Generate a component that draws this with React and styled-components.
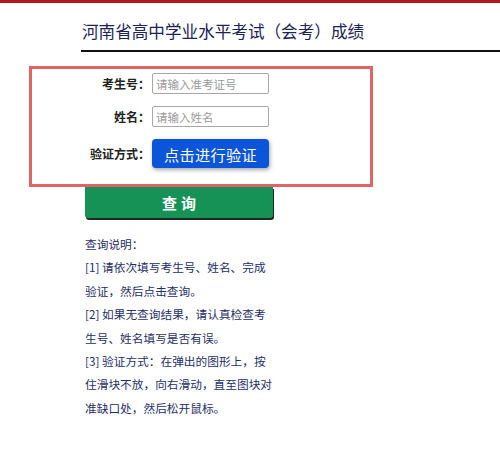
import React from "react";
import styled, { createGlobalStyle } from "styled-components";

const Global = createGlobalStyle`
  html, body { margin: 0; padding: 0; background: #fff; }
  body { font-family: "Noto Sans CJK SC", "Noto Sans", sans-serif; }
  * { box-sizing: border-box; }
`;

const Page = styled.div`
  width: 500px;
  height: 458px;
  background: #fff;
  overflow: hidden;
`;

const TopBar = styled.div`
  height: 3px;
  background: #b3161c;
`;

const Header = styled.div`
  margin-left: 81px;
  padding: 17px 0 8px 1px;
  border-bottom: 2px solid #111;
`;

const Title = styled.h1`
  margin: 0;
  font-size: 16.6px;
  line-height: 22px;
  font-weight: 400;
  color: #1c2356;
  white-space: nowrap;
`;

const FormBox = styled.div`
  margin: 14px 0 0 29px;
  width: 344px;
  height: 121px;
  border: 3px solid #e06464;
  padding: 4px 0 0 0;
  display: flex;
  flex-direction: column;
  gap: 12px;
`;

const Row = styled.div`
  display: flex;
  align-items: center;
  height: ${(p) => p.$h}px;
`;

const Label = styled.label`
  width: 118px;
  text-align: right;
  font-size: 12px;
  font-weight: 700;
  color: #222;
  margin-right: 2px;
  white-space: nowrap;
`;

const Input = styled.input`
  width: 117px;
  height: 21px;
  border: 1px solid #a8a8a8;
  border-radius: 2px;
  padding: 0 3px;
  font-family: inherit;
  font-size: 11.5px;
  color: #333;
  outline: none;
  &::placeholder { color: #9a9a9a; }
`;

const VerifyButton = styled.button`
  width: 117px;
  height: 29px;
  border: none;
  border-radius: 4px;
  background: #0b55d9;
  color: #fff;
  font-family: inherit;
  font-size: 15.2px;
  letter-spacing: 0.3px;
  box-shadow: 1px 2px 4px rgba(0, 0, 0, 0.35);
  padding: 0;
  cursor: pointer;
`;

const QueryButton = styled.button`
  display: block;
  margin-left: 85px;
  width: 188px;
  height: 31px;
  border: none;
  border-radius: 0 0 3px 3px;
  background: #179257;
  color: #fff;
  font-family: inherit;
  font-size: 15px;
  font-weight: 700;
  letter-spacing: 4px;
  padding: 0 0 0 4px;
  box-shadow: 1px 2px 0 #1d2a22;
`;

const Notes = styled.div`
  margin: 14px 0 0 85px;
  width: 189px;
  font-size: 11.7px;
  line-height: 23.4px;
  color: #262e66;
`;

const Note = styled.p`
  margin: 0;
`;

export default function App() {
  return (
    <Page>
      <Global />
      <TopBar />
      <Header>
        <Title>河南省高中学业水平考试（会考）成绩</Title>
      </Header>
      <FormBox>
        <Row $h={21}>
          <Label>考生号：</Label>
          <Input placeholder="请输入准考证号" />
        </Row>
        <Row $h={21}>
          <Label>姓名：</Label>
          <Input placeholder="请输入姓名" />
        </Row>
        <Row $h={29}>
          <Label>验证方式：</Label>
          <VerifyButton>点击进行验证</VerifyButton>
        </Row>
      </FormBox>
      <QueryButton>查询</QueryButton>
      <Notes>
        <Note>查询说明：</Note>
        <Note>[1] 请依次填写考生号、姓名、完成验证，然后点击查询。</Note>
        <Note>[2] 如果无查询结果，请认真检查考生号、姓名填写是否有误。</Note>
        <Note>[3] 验证方式：在弹出的图形上，按住滑块不放，向右滑动，直至图块对准缺口处，然后松开鼠标。</Note>
      </Notes>
    </Page>
  );
}
